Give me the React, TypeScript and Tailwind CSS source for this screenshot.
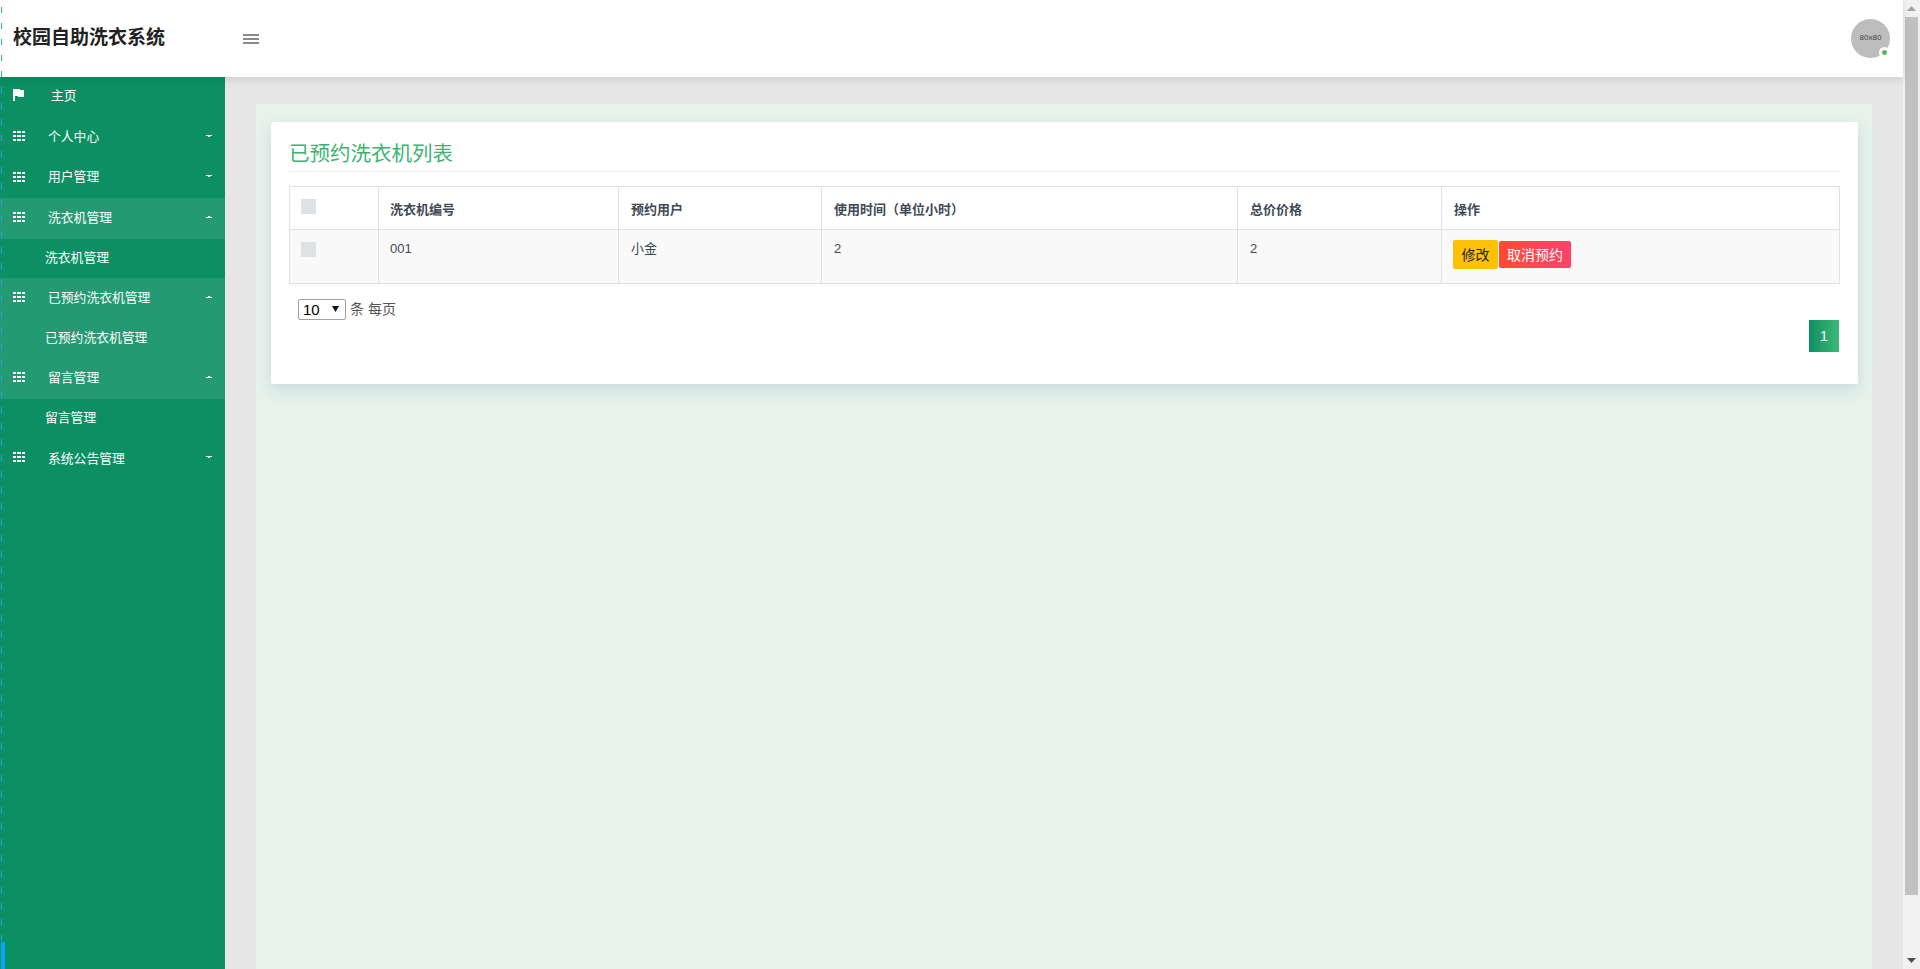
import React from 'react';

const cjk = "font-['Liberation_Sans','Noto_Sans_CJK_SC',sans-serif]";

type MenuItem = {
  label: string;
  open?: boolean;
  hot?: boolean;
  sub?: string;
  subHot?: boolean;
  nudge?: string;
};

const menu: MenuItem[] = [
  { label: '个人中心' },
  { label: '用户管理', nudge: '-mt-[2px]' },
  { label: '洗衣机管理', open: true, hot: true, sub: '洗衣机管理' },
  { label: '已预约洗衣机管理', open: true, hot: true, sub: '已预约洗衣机管理', subHot: true },
  { label: '留言管理', open: true, hot: true, sub: '留言管理' },
  { label: '系统公告管理', nudge: 'mt-[2px]' },
];

const FlagIcon = () => (
  <svg width="11" height="12" viewBox="0 0 11 12" fill="#fff" shapeRendering="crispEdges" className="-mt-[5px]">
    <path d="M0 0h2v12H0z" />
    <path d="M2 0h5v1h4v7H5V7H2z" />
  </svg>
);

const ListIcon = () => (
  <svg width="12" height="10" viewBox="0 0 12 10" fill="#fff" shapeRendering="crispEdges" className="-mt-[2px]">
    {[0, 4, 8].map((y) => (
      <g key={y}>
        <rect x="0" y={y} width="3" height="2" />
        <rect x="4" y={y} width="4" height="2" />
        <rect x="9" y={y} width="3" height="2" />
      </g>
    ))}
  </svg>
);

const Caret = ({ up }: { up?: boolean }) => (
  <svg width="6" height="2" viewBox="0 0 6 2" className="ml-auto mr-[13px] -mt-[3px]" fill="#fff" shapeRendering="crispEdges">
    {up ? <path d="M2 0h2v1H2zM0 1h6v1H0z" /> : <path d="M0 0h6v1H0zM2 1h2v1H2z" />}
  </svg>
);

const SideMenu = () => (
  <aside className="w-[225px] shrink-0 bg-[#0c8f63] text-white text-[12.8px] leading-[20px]">
    <div className="h-[40px] flex items-center pl-[13px]">
      <FlagIcon />
      <span className="ml-[27px] -mt-[2px]">主页</span>
    </div>
    {menu.map((m) => (
      <div key={m.label}>
        <div className={`h-[40.5px] flex items-center pl-[13px] ${m.hot ? 'bg-[#249a72]' : ''}`}>
          <ListIcon />
          <span className={`ml-[23px] ${m.nudge ?? ''}`}>{m.label}</span>
          <Caret up={m.open} />
        </div>
        {m.sub && (
          <div className={`h-[39.5px] flex items-center pl-[45px] ${m.subHot ? 'bg-[#249a72]' : ''}`}>{m.sub}</div>
        )}
      </div>
    ))}
  </aside>
);

const TopBar = () => (
  <header className="relative z-10 h-[77px] shrink-0 bg-white flex items-center shadow-[0_2px_8px_rgba(0,0,0,0.12)]">
    <div className="w-[243px] pl-[13px] text-[19px] font-bold text-[#222] -mt-[1px]">校园自助洗衣系统</div>
    <div className="flex flex-col gap-[2px] mt-[1px]">
      <span className="block w-[16px] h-[2px] bg-[#8a8a8a]" />
      <span className="block w-[16px] h-[2px] bg-[#8a8a8a]" />
      <span className="block w-[16px] h-[2px] bg-[#8a8a8a]" />
    </div>
    <div className="relative ml-auto mr-[13px] w-[39px] h-[39px] rounded-full bg-[#bdbdbd] flex items-center justify-center -mt-[1px]">
      <span className="text-[8px] text-[#444]">80x80</span>
      <span className="absolute right-0 bottom-0 w-[5px] h-[5px] rounded-full bg-[#5cb85c] border-[3px] border-white box-content" />
    </div>
  </header>
);

const Check = () => <span className="block w-[15px] h-[15px] bg-[#dee2e6]" />;

const th = 'border border-[#dee2e6] px-[12px] text-left font-bold align-middle pt-[4px]';
const td = 'border border-[#dee2e6] px-[12px] pt-[9px] align-top font-normal';

const BookingTable = () => (
  <table className="w-[1550px] table-fixed border-collapse text-[13px] leading-[20px] text-[#3f4a56]">
    <colgroup>
      <col className="w-[89px]" />
      <col className="w-[240px]" />
      <col className="w-[203px]" />
      <col className="w-[416px]" />
      <col className="w-[204px]" />
      <col className="w-[398px]" />
    </colgroup>
    <thead>
      <tr className="h-[43px]">
        <th className="border border-[#dee2e6] pl-[11px] align-top pt-[12px]"><Check /></th>
        <th className="border border-[#dee2e6] pl-[11px] text-left font-bold align-middle pt-[4px]">洗衣机编号</th>
        <th className={th}>预约用户</th>
        <th className={th}>使用时间（单位小时）</th>
        <th className={th}>总价价格</th>
        <th className={th}>操作</th>
      </tr>
    </thead>
    <tbody>
      <tr className="h-[54px] bg-[#f9f9f9]">
        <td className="border border-[#dee2e6] pl-[11px] align-top pt-[12px]"><Check /></td>
        <td className="border border-[#dee2e6] pl-[11px] pt-[9px] align-top">001</td>
        <td className={td}>小金</td>
        <td className={td}>2</td>
        <td className={td}>2</td>
        <td className="border border-[#dee2e6] pl-[11px] align-top pt-[10px]">
          <div className="flex items-center gap-[1px] text-[14px]">
            <button className="w-[45px] h-[29px] rounded-[2px] bg-[#ffc107] text-[#212529]">修改</button>
            <button className="w-[72px] h-[27px] rounded-[2px] bg-gradient-to-r from-[#ff4b2b] to-[#ff416c] text-white">取消预约</button>
          </div>
        </td>
      </tr>
    </tbody>
  </table>
);

const ScrollTrack = () => (
  <div className="w-[17px] shrink-0 h-full bg-[#f1f1f1] flex flex-col items-center">
    <div className="h-[17px] flex items-center justify-center">
      <svg width="9" height="5" viewBox="0 0 9 5" fill="#a3a3a3"><path d="M0 5h9L4.5 0z" /></svg>
    </div>
    <div className="w-[13px] h-[878px] bg-[#c1c1c1]" />
    <div className="mt-auto h-[17px] flex items-center justify-center">
      <svg width="9" height="5" viewBox="0 0 9 5" fill="#505050"><path d="M0 0h9L4.5 5z" /></svg>
    </div>
  </div>
);

export default function App() {
  return (
    <div className={`relative flex h-screen overflow-hidden ${cjk}`}>
      <div className="flex-1 min-w-0 flex flex-col">
        <TopBar />
        <div className="flex flex-1 min-h-0">
          <SideMenu />
          <main className="flex-1 min-w-0 bg-[#e6e6e6] px-[31px] pt-[27px]">
            <div className="h-full bg-[#e6f3ec] pt-[18px] pl-[15px] pr-[14px]">
              <section className="h-[262px] bg-white rounded-[2px] pl-[18px] pr-[19px] pt-[17px] shadow-[0_6px_16px_rgba(60,90,130,0.16)]">
                <h2 className="text-[20.5px] leading-[30px] text-[#3cb371] pb-[2px] border-b border-[#e9ecef] h-[33px]">已预约洗衣机列表</h2>
                <div className="mt-[14px]">
                  <BookingTable />
                </div>
                <div className="flex items-center mt-[15px] pl-[9px] text-[14px] text-[#555]">
                  <div className="relative w-[48px] h-[21px]">
                    <select className="appearance-none w-full h-full border border-[#a0a0a0] rounded-[2px] bg-white text-[15px] leading-[18px] text-black pl-[4px]" defaultValue="10">
                      <option>10</option>
                    </select>
                    <svg width="7" height="6" viewBox="0 0 7 6" fill="#111" className="absolute right-[7px] top-[7px]"><path d="M0 0h7L3.5 6z" /></svg>
                  </div>
                  <span className="ml-[4px]">条 每页</span>
                </div>
                <div className="flex justify-end">
                  <span className="w-[30px] h-[32px] flex items-center justify-center text-[14px] text-white bg-gradient-to-r from-[#0a8f63] to-[#3cb878]">1</span>
                </div>
              </section>
            </div>
          </main>
        </div>
      </div>
      <ScrollTrack />
      <div className="absolute left-[1px] top-[7px] bottom-[27px] w-[1px] bg-[repeating-linear-gradient(to_bottom,#2ea0e6_0,#2ea0e6_6px,transparent_6px,transparent_16px)] z-20" />
      <div className="absolute left-[1px] bottom-0 w-[4px] h-[27px] bg-[#00a8ff] z-20" />
    </div>
  );
}
